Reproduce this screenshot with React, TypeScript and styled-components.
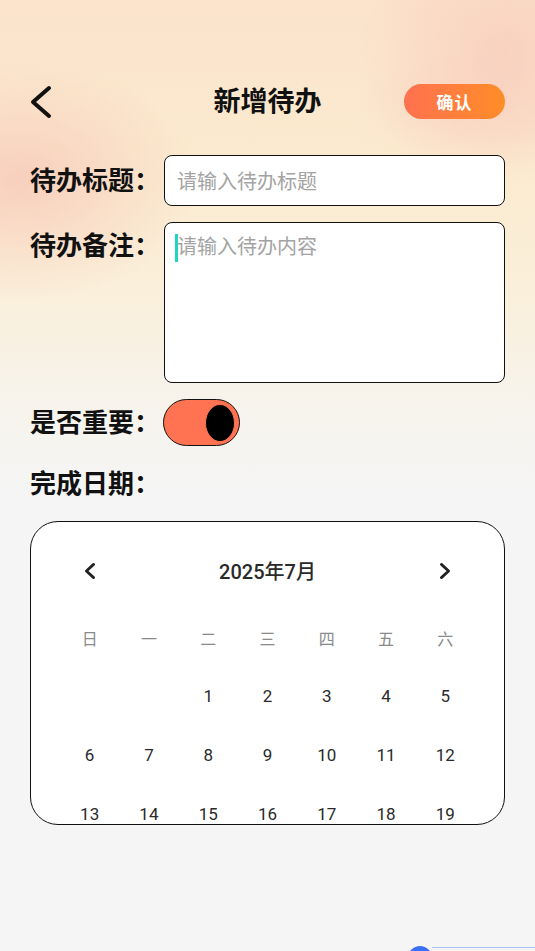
import React from 'react';
import styled, { createGlobalStyle } from 'styled-components';

const GlobalStyle = createGlobalStyle`
  html, body {
    margin: 0;
    padding: 0;
    background: #f5f5f5;
  }
  * {
    box-sizing: border-box;
  }
`;

const Page = styled.div`
  min-height: 951px;
  overflow: hidden;
  padding: 84px 30px 0;
  font-family: "Noto Sans CJK SC", "Noto Sans", sans-serif;
  background:
    radial-gradient(ellipse 180px 120px at 20px 180px, rgba(247, 198, 182, 0.75), rgba(247, 198, 182, 0)),
    radial-gradient(ellipse 150px 130px at 505px 55px, rgba(248, 200, 186, 0.7), rgba(248, 200, 186, 0)),
    radial-gradient(ellipse 120px 60px at 470px 110px, rgba(249, 214, 196, 0.6), rgba(249, 214, 196, 0)),
    linear-gradient(180deg, #fbe3cb 0px, #fbebd0 170px, #faefda 290px, #f7f3ea 390px, #f5f5f5 490px);
`;

const Header = styled.div`
  display: grid;
  grid-template-columns: 1fr auto 1fr;
  align-items: center;
  height: 35px;
`;

const BackButton = styled.button`
  justify-self: start;
  display: flex;
  align-items: center;
  padding: 0;
  border: none;
  background: none;
  cursor: pointer;
`;

const Title = styled.h1`
  margin: 0 0 4px;
  font-size: 27px;
  line-height: 28px;
  font-weight: 700;
  color: #111;
`;

const ConfirmButton = styled.button`
  justify-self: end;
  width: 101px;
  height: 35px;
  border: none;
  border-radius: 18px;
  background: linear-gradient(90deg, #ff7150 0%, #ff8d28 100%);
  color: #fff;
  font-family: inherit;
  font-size: 17px;
  font-weight: 700;
  letter-spacing: 1px;
  cursor: pointer;
`;

const FormRow = styled.div<{ $top: number; $align?: string }>`
  display: flex;
  align-items: ${(p) => p.$align || 'center'};
  margin-top: ${(p) => p.$top}px;
`;

const Label = styled.label<{ $pad?: number }>`
  flex: 0 0 134px;
  font-size: 26px;
  line-height: 30px;
  font-weight: 700;
  color: #111;
  white-space: nowrap;
  padding-top: ${(p) => p.$pad || 0}px;
  margin-bottom: 3px;
`;

const TextInput = styled.input`
  flex: 1;
  height: 51px;
  padding: 0 12px;
  border: 1.5px solid #111;
  border-radius: 8px;
  background: #fff;
  font-family: inherit;
  font-size: 20px;
  color: #333;
  outline: none;

  &::placeholder {
    color: #a3a3a3;
  }
`;

const AreaWrap = styled.div`
  position: relative;
  flex: 1;
  display: flex;
`;

const TextArea = styled.textarea`
  flex: 1;
  height: 161px;
  padding: 9px 12px;
  border: 1.5px solid #111;
  border-radius: 8px;
  background: #fff;
  font-family: inherit;
  font-size: 20px;
  line-height: 28px;
  color: #333;
  resize: none;
  outline: none;

  &::placeholder {
    color: #a3a3a3;
  }
`;

const Caret = styled.span`
  position: absolute;
  left: 11px;
  top: 12px;
  width: 3px;
  height: 28px;
  background: #1fd6c6;
`;

const Toggle = styled.button<{ $on: boolean }>`
  position: relative;
  width: 77px;
  height: 47px;
  margin-left: -1px;
  padding: 0;
  border: 1.5px solid #111;
  border-radius: 24px;
  background: ${(p) => (p.$on ? '#ff7352' : '#ddd')};
  cursor: pointer;
`;

const Knob = styled.span<{ $on: boolean }>`
  position: absolute;
  top: 3.5px;
  ${(p) => (p.$on ? 'right: 4.5px;' : 'left: 4.5px;')}
  width: 30px;
  height: 38px;
  border-radius: 50%;
  background: #000;
  border: 1.5px solid #ff7352;
`;

const Calendar = styled.div`
  margin-top: 21px;
  height: 304px;
  overflow: hidden;
  padding: 34px 29px 0;
  border: 1px solid #111;
  border-radius: 28px;
  background: #fff;
  font-family: Roboto, "Noto Sans CJK SC", sans-serif;
`;

const MonthBar = styled.div`
  display: grid;
  grid-template-columns: 59.5px 1fr 59.5px;
  align-items: center;
  height: 28px;
`;

const NavButton = styled.button`
  display: flex;
  justify-content: center;
  align-items: center;
  padding: 0;
  border: none;
  background: none;
  cursor: pointer;
`;

const MonthTitle = styled.div`
  text-align: center;
  font-size: 20px;
  font-weight: 500;
  color: #2a2a2a;
`;

const WeekRow = styled.div`
  display: grid;
  grid-template-columns: repeat(7, 1fr);
  margin-top: 34px;
  height: 40px;
  align-items: center;
`;

const WeekDay = styled.div`
  text-align: center;
  font-family: "Noto Sans CJK SC", sans-serif;
  font-size: 16px;
  color: #8a8a8a;
`;

const DayGrid = styled.div`
  display: grid;
  grid-template-columns: repeat(7, 1fr);
  grid-auto-rows: 59px;
  margin-top: 8.5px;
  align-items: center;
`;

const Day = styled.div`
  text-align: center;
  font-size: 17px;
  color: #2a2a2a;
`;

const SliderRow = styled.div`
  display: flex;
  align-items: flex-start;
  width: 127px;
  margin: 121px -30px 0 auto;
`;

const Thumb = styled.span`
  flex: 0 0 24px;
  height: 24px;
  border-radius: 50%;
  background: #3a70f8;
`;

const Track = styled.span`
  flex: 1;
  height: 1px;
  margin-top: 1px;
  background: #a9c1f6;
`;

const Chevron = ({ dir, w, h, stroke, color }: { dir: 'l' | 'r'; w: number; h: number; stroke: number; color: string }) => (
  <svg width={w} height={h} viewBox={`0 0 ${w} ${h}`} fill="none">
    <path
      d={
        dir === 'l'
          ? `M${w - stroke / 2 - 1} ${stroke / 2 + 1} L${stroke / 2 + 1} ${h / 2} L${w - stroke / 2 - 1} ${h - stroke / 2 - 1}`
          : `M${stroke / 2 + 1} ${stroke / 2 + 1} L${w - stroke / 2 - 1} ${h / 2} L${stroke / 2 + 1} ${h - stroke / 2 - 1}`
      }
      stroke={color}
      strokeWidth={stroke}
      strokeLinecap="round"
      strokeLinejoin="round"
    />
  </svg>
);

const weekDays = ['日', '一', '二', '三', '四', '五', '六'];

const buildDays = () => {
  const cells: (number | null)[] = [null, null];
  for (let d = 1; d <= 31; d++) cells.push(d);
  return cells;
};

export default function App() {
  const [important, setImportant] = React.useState(true);
  const days = buildDays();

  return (
    <>
      <GlobalStyle />
      <Page>
        <Header>
          <BackButton aria-label="返回">
            <Chevron dir="l" w={22} h={34} stroke={4} color="#111" />
          </BackButton>
          <Title>新增待办</Title>
          <ConfirmButton>确认</ConfirmButton>
        </Header>

        <FormRow $top={36}>
          <Label>待办标题：</Label>
          <TextInput placeholder="请输入待办标题" />
        </FormRow>

        <FormRow $top={16} $align="flex-start">
          <Label $pad={7}>待办备注：</Label>
          <AreaWrap>
            <TextArea placeholder="请输入待办内容" />
            <Caret />
          </AreaWrap>
        </FormRow>

        <FormRow $top={16}>
          <Label>是否重要：</Label>
          <Toggle $on={important} onClick={() => setImportant(!important)}>
            <Knob $on={important} />
          </Toggle>
        </FormRow>

        <FormRow $top={21}>
          <Label>完成日期：</Label>
        </FormRow>

        <Calendar>
          <MonthBar>
            <NavButton aria-label="上个月">
              <Chevron dir="l" w={12} h={18} stroke={2.8} color="#222" />
            </NavButton>
            <MonthTitle>2025年7月</MonthTitle>
            <NavButton aria-label="下个月">
              <Chevron dir="r" w={12} h={18} stroke={2.8} color="#222" />
            </NavButton>
          </MonthBar>
          <WeekRow>
            {weekDays.map((w) => (
              <WeekDay key={w}>{w}</WeekDay>
            ))}
          </WeekRow>
          <DayGrid>
            {days.map((d, i) => (
              <Day key={i}>{d ?? ''}</Day>
            ))}
          </DayGrid>
        </Calendar>

        <SliderRow>
          <Thumb />
          <Track />
        </SliderRow>
      </Page>
    </>
  );
}
